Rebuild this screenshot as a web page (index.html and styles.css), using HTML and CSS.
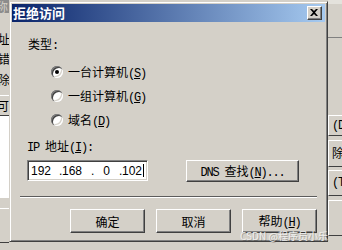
FILE: index.html
```html
<!DOCTYPE html>
<html lang="zh-CN">
<head>
  <meta charset="UTF-8" />
  <title>拒绝访问</title>
  <link rel="stylesheet" href="styles.css">
</head>
<body>
  <div class="desk">
    <div class="side side-left">
      <div class="cap">称</div>
      <div class="ltxt first">址</div>
      <div class="ltxt">错</div>
      <div class="ltxt">除</div>
      <div class="lhdr">可</div>
      <div class="llist"></div>
      <div class="lfoot"></div>
    </div>
    <div class="mid"></div>
    <div class="side side-right">
      <div class="rtop"></div>
      <div class="rbtn r1"><span class="a">(D)</span></div>
      <div class="rbtn r2">除</div>
      <div class="rbtn r3"><span class="a">(T)</span></div>
      <div class="rbtn r4"></div>
    </div>
  </div>

  <div class="dialog">
    <div class="titlebar">
      <span class="title">拒绝访问</span>
      <span class="close">
        <svg width="8" height="7" viewBox="0 0 8 7"><path d="M0 0h2l2 2 2-2h2L5 3.5 8 7H6L4 5 2 7H0l3-3.5z" fill="#000"/></svg>
      </span>
    </div>
    <div class="dlg-body">
      <div class="group-label">类型<span class="a">:</span></div>
      <div class="radios">
        <div class="radio-row"><span class="radio checked"></span><span>一台计算机<span class="a">(<u>S</u>)</span></span></div>
        <div class="radio-row"><span class="radio"></span><span>一组计算机<span class="a">(<u>G</u>)</span></span></div>
        <div class="radio-row"><span class="radio"></span><span>域名<span class="a">(<u>D</u>)</span></span></div>
      </div>
      <div class="ip-label"><span class="a">IP </span>地址<span class="a">(<u>I</u>):</span></div>
      <div class="ip-row">
        <div class="ip-field">
          <span class="oct o1">192</span><span class="dot">.</span><span class="oct o2">168</span><span class="dot">.</span><span class="oct o3">0</span><span class="dot">.</span><span class="oct">102</span><span class="caret"></span>
        </div>
        <div class="btn dns"><span><span class="a">DNS </span>查找<span class="a">(<u>N</u>)...</span></span></div>
      </div>
      <div class="sep"></div>
      <div class="actions">
        <div class="btn">确定</div>
        <div class="btn">取消</div>
        <div class="btn"><span>帮助<span class="a">(<u>H</u>)</span></span></div>
      </div>
    </div>
  </div>

  <div class="mark">CSDN @程序员小乐</div>
</body>
</html>
```

FILE: styles.css
```css
* { box-sizing: border-box; }
html, body {
  margin: 0;
  padding: 0;
  width: 342px;
  height: 250px;
  overflow: hidden;
  background: #d4d0c8;
  font-family: "Noto Sans CJK SC", sans-serif;
  font-size: 12px;
  color: #000;
}
.a {
  font-family: "Liberation Mono", monospace;
  font-size: 12px;
  letter-spacing: -1.2px;
  white-space: pre;
}
u { text-underline-offset: 1px; }

/* parent window behind the dialog */
.desk {
  display: flex;
  height: 250px;
}
.side { overflow: hidden; }
.side-left { width: 9px; display: flex; flex-direction: column; }
.mid { flex: 1; }
.side-right { width: 14px; display: flex; flex-direction: column; }
.cap {
  height: 13px;
  background: #8c8c8c;
  color: #d4d0c8;
  line-height: 13px;
  margin-left: -4px;
}
.ltxt {
  height: 14px;
  line-height: 14px;
  margin-top: 6px;
  margin-left: -2px;
}
.ltxt.first { margin-top: 19px; }
.ltxt + .ltxt + .ltxt { margin-top: 7px; }
.lhdr {
  margin-top: 8px;
  height: 21px;
  line-height: 19px;
  border-top: 1px solid #fff;
  border-bottom: 1px solid #404040;
  margin-left: -3px;
}
.llist {
  height: 82px;
  background: #fff;
}
.lfoot {
  height: 45px;
  border-top: 10px solid #d4d0c8;
  box-shadow: inset 0 1px #fff;
  border-bottom: 1px solid #404040;
}
.rtop {
  height: 38px;
  border-top: 4px solid #e4e2dc;
  border-bottom: 1px solid #808080;
  margin-bottom: 77px;
}
.rbtn {
  border-top: 1px solid #fff;
  border-left: 1px solid #fff;
  border-bottom: 1px solid #404040;
  padding-left: 3px;
  white-space: nowrap;
}
.r1 { height: 21px; line-height: 15px; }
.r2 { height: 27px; line-height: 24px; margin-top: 4px; }
.r3 { height: 26px; line-height: 20px; margin-top: 3px; }
.r4 { height: 36px; margin-top: 4px; }

/* dialog */
.dialog {
  position: absolute;
  left: 9px;
  top: 1px;
  width: 319px;
  height: 241px;
  background: #d4d0c8;
  border: 1px solid;
  border-color: #d4d0c8 #404040 #404040 #d4d0c8;
  box-shadow: inset 1px 1px #fff, inset -1px -1px #808080;
  padding: 2px;
}
.titlebar {
  height: 18px;
  background: linear-gradient(to right, #0a246a, #a6caf0);
  display: flex;
  align-items: center;
  justify-content: space-between;
  padding: 0 3px 0 1px;
}
.title {
  color: #fff;
  font-weight: bold;
  font-size: 13px;
  line-height: 18px;
}
.close {
  width: 15px;
  height: 14px;
  background: #d4d0c8;
  border: 1px solid;
  border-color: #fff #404040 #404040 #fff;
  box-shadow: inset -1px -1px #808080;
  display: flex;
  align-items: center;
  justify-content: center;
  padding: 0 1px 1px 0;
}
.dlg-body {
  padding: 0 8px;
}
.group-label {
  margin: 14px 0 0 8px;
  line-height: 16px;
}
.radios {
  margin-top: 6px;
  padding-left: 31px;
}
.radio-row {
  height: 24px;
  display: flex;
  align-items: center;
  gap: 5px;
}
.radio {
  width: 12px;
  height: 12px;
  border-radius: 50%;
  background: #fff;
  box-shadow: inset 1px 1px #808080, inset 2px 2px #404040, inset -1px -1px #fff, inset -2px -2px #d4d0c8;
  display: flex;
  align-items: center;
  justify-content: center;
}
.radio.checked::after {
  content: "";
  width: 4px;
  height: 4px;
  border-radius: 50%;
  background: #000;
}
.ip-label {
  margin: 6px 0 0 7px;
  line-height: 16px;
}
.ip-row {
  margin-top: 4px;
  padding-left: 7px;
  display: flex;
  align-items: flex-start;
}
.ip-field {
  width: 121px;
  height: 21px;
  background: #fff;
  border: 1px solid;
  border-color: #808080 #fff #fff #808080;
  box-shadow: inset 1px 1px #404040, inset -1px -1px #d4d0c8;
  display: flex;
  align-items: center;
  padding-left: 3px;
  font-family: "Liberation Sans", sans-serif;
  font-size: 12px;
}
.oct { display: inline-block; }
.o1 { width: 28px; }
.o2 { width: 29px; }
.o3 { width: 25px; text-align: center; }
.dot { display: inline-block; width: 3px; }
.caret {
  width: 1px;
  height: 13px;
  background: #000;
  margin-left: 1px;
}
.btn {
  height: 24px;
  width: 75px;
  background: #d4d0c8;
  border: 1px solid;
  border-color: #fff #404040 #404040 #fff;
  box-shadow: inset -1px -1px #808080;
  display: flex;
  align-items: center;
  justify-content: center;
  white-space: nowrap;
}
.btn.dns {
  width: 113px;
  height: 22px;
  margin-left: 38px;
}
.sep {
  margin-top: 14px;
  height: 2px;
  border-top: 1px solid #5c5c5c;
  border-bottom: 1px solid #fff;
}
.actions {
  margin-top: 11px;
  display: flex;
  justify-content: flex-end;
  gap: 11px;
}
.mark {
  position: absolute;
  left: 240px;
  top: 231px;
  font-size: 10px;
  line-height: 10px;
  color: #eeeeee;
  text-shadow: 1px 1px 0 rgba(0, 0, 0, 0.25);
  white-space: nowrap;
}
```
